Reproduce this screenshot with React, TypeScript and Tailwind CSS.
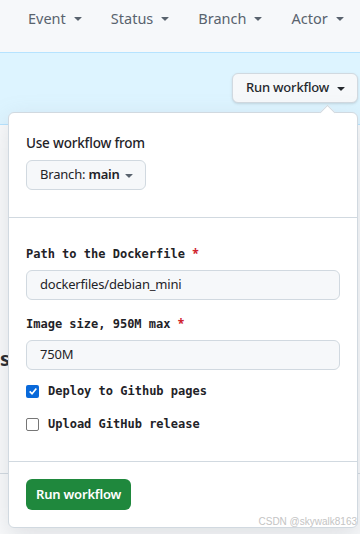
import { useState } from "react";

function Caret({ className = "" }: { className?: string }) {
  return (
    <svg viewBox="0 0 16 16" width="16" height="16" className={className} fill="currentColor">
      <path d="m4.427 7.427 3.396 3.396a.25.25 0 0 0 .354 0l3.396-3.396A.25.25 0 0 0 11.396 7H4.604a.25.25 0 0 0-.177.427Z" />
    </svg>
  );
}

const filters = ["Event", "Status", "Branch", "Actor"];

export default function App() {
  const [deploy, setDeploy] = useState(true);
  const [upload, setUpload] = useState(false);

  return (
    <div className="relative h-[534px] w-[360px] overflow-hidden bg-[#f9fafb] font-['Noto_Sans',sans-serif] text-[#1f2328]">
      {/* Filter bar */}
      <div className="flex h-[53px] items-start gap-[25px] border-b border-[#b6e3ff] bg-[#f6f8fa] pl-[28px] pt-[8px] text-[14.5px] leading-[20px] text-[#59636e]">
        {filters.map((f) => (
          <div key={f} className="flex items-center gap-[4px]">
            <span>{f}</span>
            <Caret />
          </div>
        ))}
      </div>

      {/* Banner */}
      <div className="flex h-[72px] items-start justify-end border-b border-[#b6e3ff] bg-[#ddf4ff] pr-[2px] pt-[20px]">
        <button className="flex h-[30px] items-center gap-[4px] rounded-md border border-[#d1d9e0] bg-[#f6f8fa] pl-[13px] pr-[8px] text-[13px] font-medium tracking-[-0.2px] text-[#25292e] shadow-sm">
          Run workflow
          <Caret />
        </button>
      </div>

      {/* Page content behind the popover */}
      <div className="pt-[222px] text-[20px] font-bold leading-[24px] text-[#1f2328]">s</div>
      <div className="mt-[102px] border-t border-[#d1d9e0]" />

      {/* Popover */}
      <div className="absolute left-[8px] top-[112px] w-[350px] rounded-md border border-[#d1d9e0] bg-white text-[13px] tracking-[-0.2px] shadow-[0_8px_24px_rgba(140,149,159,0.25)]">
        <div className="absolute -top-[6px] right-[24px] h-[11px] w-[11px] rotate-45 border-l border-t border-[#d1d9e0] bg-white" />

        <div className="border-b border-[#d1d9e0] px-[17px] pb-[27px] pt-[20px]">
          <div className="text-[13.5px] font-medium leading-[20px]">Use workflow from</div>
          <button className="mt-[7px] flex h-[30px] items-center gap-[1px] rounded-md border border-[#d1d9e0] bg-[#f6f8fa] pl-[13px] pr-[8px] tracking-[-0.2px]">
            <span>
              Branch: <span className="font-semibold">main</span>
            </span>
            <Caret className="text-[#59636e]" />
          </button>
        </div>

        <div className="border-b border-[#d1d9e0] px-[17px] pb-[27px] pt-[27px] tracking-normal">
          <label className="block font-['DejaVu_Sans_Mono',monospace] text-[12px] font-bold leading-[18px]">
            Path to the Dockerfile <span className="font-['Noto_Sans',sans-serif] text-[#cf222e]">*</span>
          </label>
          <div className="mt-[7px] flex h-[30px] items-center rounded-md border border-[#d1d9e0] bg-[#f6f8fa] px-[13px] text-[13px] tracking-[-0.2px]">
            dockerfiles/debian_mini
          </div>

          <label className="mt-[15px] block font-['DejaVu_Sans_Mono',monospace] text-[12px] font-bold leading-[18px]">
            Image size, 950M max <span className="font-['Noto_Sans',sans-serif] text-[#cf222e]">*</span>
          </label>
          <div className="mt-[7px] flex h-[30px] items-center rounded-md border border-[#d1d9e0] bg-[#f6f8fa] px-[13px] text-[13px] tracking-[-0.2px]">
            750M
          </div>

          <label className="mt-[11px] flex h-[20px] items-center gap-[9px] font-['DejaVu_Sans_Mono',monospace] text-[12px] font-bold">
            <span
              onClick={() => setDeploy(!deploy)}
              className={
                deploy
                  ? "flex h-[13px] w-[13px] items-center justify-center rounded-[2px] bg-[#0969da]"
                  : "h-[13px] w-[13px] rounded-[2px] border border-[#767676] bg-white"
              }
            >
              {deploy && (
                <svg viewBox="0 0 12 12" width="10" height="10" fill="none" stroke="white" strokeWidth="2">
                  <path d="M2 6.5 4.8 9.2 10 3" />
                </svg>
              )}
            </span>
            Deploy to Github pages
          </label>

          <label className="mt-[13px] flex h-[20px] items-center gap-[9px] font-['DejaVu_Sans_Mono',monospace] text-[12px] font-bold">
            <span
              onClick={() => setUpload(!upload)}
              className={
                upload
                  ? "flex h-[13px] w-[13px] items-center justify-center rounded-[2px] bg-[#0969da]"
                  : "h-[13px] w-[13px] rounded-[2px] border border-[#767676] bg-white"
              }
            />
            Upload GitHub release
          </label>
        </div>

        <div className="px-[17px] pb-[17px] pt-[17px]">
          <button className="h-[31px] rounded-md bg-[#1f883d] px-[10px] font-semibold text-white">
            Run workflow
          </button>
        </div>
      </div>

      <div className="absolute bottom-[5px] right-[3px] font-['Liberation_Sans',sans-serif] text-[10px] text-[#c4c4c4]">
        CSDN @skywalk8163
      </div>
    </div>
  );
}
